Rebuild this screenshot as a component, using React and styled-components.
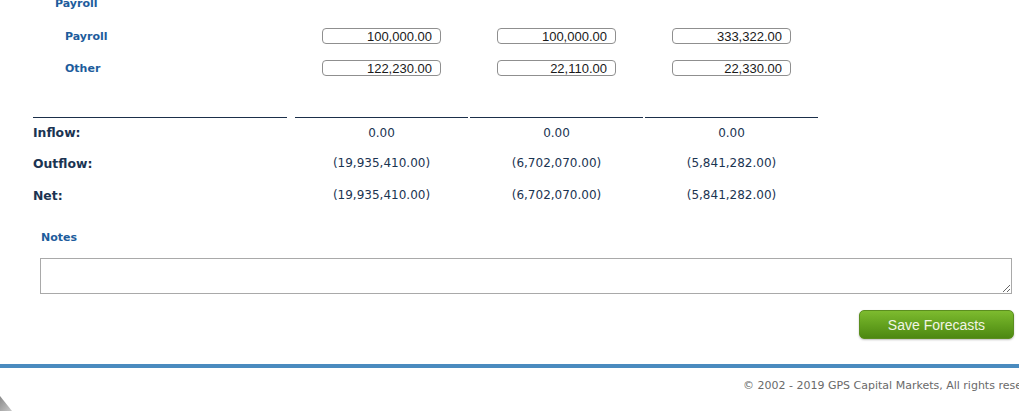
import styled, { createGlobalStyle } from "styled-components";

const rows = [
  { label: "Payroll", values: ["100,000.00", "100,000.00", "333,322.00"] },
  { label: "Other", values: ["122,230.00", "22,110.00", "22,330.00"] },
];

const totals = [
  { label: "Inflow:", values: ["0.00", "0.00", "0.00"] },
  { label: "Outflow:", values: ["(19,935,410.00)", "(6,702,070.00)", "(5,841,282.00)"] },
  { label: "Net:", values: ["(19,935,410.00)", "(6,702,070.00)", "(5,841,282.00)"] },
];

function App() {
  return (
    <Page>
      <GlobalStyle />
      <Content>
        <GroupTitle>Payroll</GroupTitle>
        <InputGrid>
          {rows.map((row) => (
            <Row key={row.label}>
              <RowLabel>{row.label}</RowLabel>
              {row.values.map((v, i) => (
                <Cell key={i}>
                  <AmountInput defaultValue={v} />
                </Cell>
              ))}
            </Row>
          ))}
        </InputGrid>

        <Totals>
          <RuleRow>
            <Rule $first />
            <Rule />
            <Rule />
            <Rule />
          </RuleRow>
          {totals.map((row, idx) => (
            <TotalRow key={row.label} $short={idx === 0}>
              <TotalLabel>{row.label}</TotalLabel>
              {row.values.map((v, i) => (
                <TotalValue key={i}>{v}</TotalValue>
              ))}
            </TotalRow>
          ))}
        </Totals>

        <NotesLabel>Notes</NotesLabel>
        <Notes />
        <Actions>
          <SaveButton type="button">Save Forecasts</SaveButton>
        </Actions>
      </Content>
      <Footer>
        <Copyright>© 2002 - 2019 GPS Capital Markets, All rights reserved.</Copyright>
      </Footer>
      <Corner width="14" height="16" viewBox="0 0 14 16">
        <defs>
          <linearGradient id="cg" x1="0" y1="0" x2="1" y2="1">
            <stop offset="0" stopColor="#8a8a8a" />
            <stop offset="1" stopColor="#c8c8c8" />
          </linearGradient>
        </defs>
        <polygon points="0,1 12,16 0,16" fill="url(#cg)" />
      </Corner>
    </Page>
  );
}

const GlobalStyle = createGlobalStyle`
  html, body {
    margin: 0;
    padding: 0;
    background: #fff;
    overflow: hidden;
  }
  body {
    font-family: "DejaVu Sans", Verdana, sans-serif;
  }
`;

const Page = styled.div`
  position: relative;
  width: 1019px;
  height: 411px;
  overflow: hidden;
`;

const Content = styled.div`
  padding: 0 5px 0 33px;
`;

const GroupTitle = styled.div`
  margin-top: -3px;
  padding-left: 22px;
  height: 14px;
  line-height: 14px;
  font-size: 11px;
  font-weight: bold;
  color: #1d5c9c;
`;

const InputGrid = styled.div`
  margin-top: 9px;
`;

const Row = styled.div`
  display: grid;
  grid-template-columns: 262px 175px 175px 175px;
  align-items: center;
  height: 32px;
`;

const RuleRow = styled(Row)`
  height: 1px;
  align-items: stretch;
`;

const TotalRow = styled(Row)`
  height: ${(p) => (p.$short ? "29px" : "32px")};
`;

const RowLabel = styled.div`
  padding-left: 32px;
  font-size: 11px;
  font-weight: bold;
  color: #1d5c9c;
`;

const Cell = styled.div`
  width: 173px;
  display: flex;
  justify-content: center;
`;

const AmountInput = styled.input`
  box-sizing: border-box;
  width: 119px;
  height: 16px;
  padding: 0 8px 0 4px;
  border: 1px solid #8f8f8f;
  border-radius: 4px;
  font-family: "Liberation Sans", Arial, sans-serif;
  font-size: 13px;
  line-height: 14px;
  color: #1a1a1a;
  text-align: right;
  background: #fff;
  outline: none;
`;

const Totals = styled.div`
  margin-top: 33px;
`;

const Rule = styled.div`
  width: ${(p) => (p.$first ? "254px" : "173px")};
  height: 1px;
  background: #1b2f4a;
`;

const TotalLabel = styled.div`
  font-size: 12.4px;
  font-weight: bold;
  color: #1b3452;
`;

const TotalValue = styled.div`
  width: 173px;
  text-align: center;
  font-size: 12px;
  color: #1b3452;
`;

const NotesLabel = styled.div`
  margin-top: 20px;
  padding-left: 8px;
  height: 14px;
  line-height: 14px;
  font-size: 11px;
  font-weight: bold;
  color: #1d5c9c;
`;

const Notes = styled.textarea`
  display: block;
  box-sizing: border-box;
  margin: 13px 0 0 7px;
  width: 972px;
  height: 36px;
  border: 1px solid #a9a9a9;
  resize: both;
  font-family: "Liberation Sans", Arial, sans-serif;
  font-size: 13px;
  outline: none;
`;

const Actions = styled.div`
  display: flex;
  justify-content: flex-end;
  margin-top: 16px;
`;

const SaveButton = styled.button`
  width: 155px;
  height: 29px;
  border: 1px solid #5b8e1f;
  border-radius: 5px;
  background: linear-gradient(to bottom, #7dbb2f 0%, #64a21f 50%, #4d8812 100%);
  box-shadow: 0 1px 2px rgba(0, 0, 0, 0.25);
  color: #f2f5e4;
  font-family: "Liberation Sans", Arial, sans-serif;
  font-size: 14px;
  cursor: pointer;
`;

const Footer = styled.div`
  margin-top: 25px;
  border-top: 4px solid #4a8bbf;
  padding: 11px 0 0 743px;
`;

const Copyright = styled.div`
  white-space: nowrap;
  font-size: 11px;
  line-height: 14px;
  color: #6a6a6a;
`;

const Corner = styled.svg`
  position: absolute;
  left: 0;
  bottom: 0;
  display: block;
`;

export default App;
